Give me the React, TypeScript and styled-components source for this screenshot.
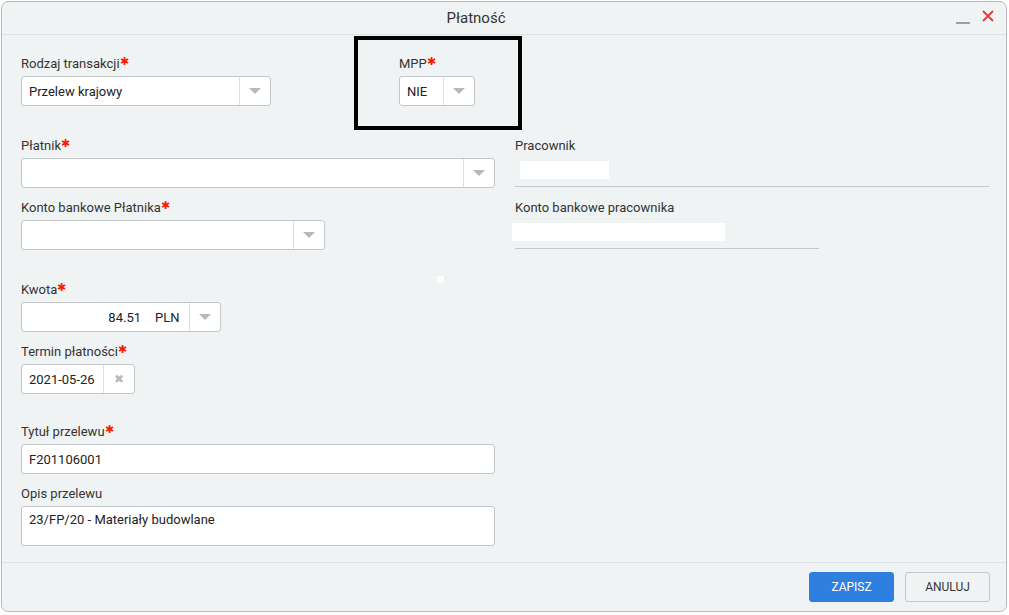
import styled, { createGlobalStyle } from "styled-components";

const GlobalStyle = createGlobalStyle`
  html, body {
    margin: 0;
    padding: 0;
    background: #ffffff;
    font-family: Roboto, "Liberation Sans", sans-serif;
  }
`;

const Caret = () => (
  <svg width="14" height="8" viewBox="0 0 14 8">
    <path d="M1 1 L13 1 L7 7 Z" fill="#b5b9bc" />
  </svg>
);

const CloseIcon = () => (
  <svg width="12" height="12" viewBox="0 0 12 12">
    <path d="M1 1 L11 11 M11 1 L1 11" stroke="#e53935" strokeWidth="1.8" />
  </svg>
);

const Label = ({ text, required }: { text: string; required?: boolean }) => (
  <LabelText>
    {text}
    {required && <Star>✱</Star>}
  </LabelText>
);

const App = () => {
  return (
    <>
      <GlobalStyle />
      <Window>
        <Header>
          <Title>Płatność</Title>
          <HeaderIcons>
            <Minimize />
            <CloseIcon />
          </HeaderIcons>
        </Header>

        <Body>
          <Row>
            <Field>
              <Label text="Rodzaj transakcji" required />
              <Select width={250}>
                <SelectValue>Przelew krajowy</SelectValue>
                <ArrowCell>
                  <Caret />
                </ArrowCell>
              </Select>
            </Field>
            <Highlight>
              <Field>
                <Label text="MPP" required />
                <Select width={76}>
                  <SelectValue>NIE</SelectValue>
                  <ArrowCell>
                    <Caret />
                  </ArrowCell>
                </Select>
              </Field>
            </Highlight>
          </Row>

          <Columns>
            <LeftCol>
              <Field>
                <Label text="Płatnik" required />
                <Select width={474}>
                  <SelectValue />
                  <ArrowCell>
                    <Caret />
                  </ArrowCell>
                </Select>
              </Field>
              <Field>
                <Label text="Konto bankowe Płatnika" required />
                <Select width={304}>
                  <SelectValue />
                  <ArrowCell>
                    <Caret />
                  </ArrowCell>
                </Select>
              </Field>
            </LeftCol>
            <RightCol>
              <ReadField width={474}>
                <Label text="Pracownik" />
                <Masked width={89} offset={5} />
              </ReadField>
              <ReadField width={304}>
                <Label text="Konto bankowe pracownika" />
                <Masked width={213} offset={-3} />
              </ReadField>
            </RightCol>
          </Columns>

          <Spot />

          <Stack>
            <Field>
              <Label text="Kwota" required />
              <Select width={200}>
                <Amount>84.51</Amount>
                <Currency>PLN</Currency>
                <ArrowCell>
                  <Caret />
                </ArrowCell>
              </Select>
            </Field>
            <Field>
              <Label text="Termin płatności" required />
              <Select width={114}>
                <SelectValue>2021-05-26</SelectValue>
                <ClearCell>✖</ClearCell>
              </Select>
            </Field>
          </Stack>

          <Stack style={{ marginTop: 28 }}>
            <Field>
              <Label text="Tytuł przelewu" required />
              <TextBox width={474}>F201106001</TextBox>
            </Field>
            <Field>
              <Label text="Opis przelewu" />
              <TextArea>23/FP/20 - Materiały budowlane</TextArea>
            </Field>
          </Stack>
        </Body>

        <Footer>
          <Button primary>ZAPISZ</Button>
          <Button>ANULUJ</Button>
        </Footer>
      </Window>
    </>
  );
};

const Window = styled.div`
  margin: 1px 2px 2px 1px;
  height: 611px;
  box-sizing: border-box;
  border: 1px solid #b9bcbe;
  border-radius: 7px;
  background: #f0f3f4;
  display: flex;
  flex-direction: column;
  color: #333;
  overflow: hidden;
`;

const Header = styled.div`
  height: 32px;
  border-bottom: 1px solid #dfe3e5;
  display: flex;
  align-items: center;
  justify-content: center;
  padding-right: 56px;
  position: relative;
`;

const Title = styled.div`
  font-size: 15px;
  color: #333;
`;

const HeaderIcons = styled.div`
  position: absolute;
  right: 12px;
  top: 8px;
  display: flex;
  align-items: flex-start;
  gap: 12px;
`;

const Minimize = styled.div`
  width: 14px;
  height: 2px;
  background: #9aa0a4;
  margin-top: 12px;
`;

const Body = styled.div`
  flex: 1;
  padding: 19px 0 0 19px;
  display: flex;
  flex-direction: column;
`;

const Row = styled.div`
  display: flex;
  align-items: flex-start;
  height: 82px;
`;

const Field = styled.div`
  display: flex;
  flex-direction: column;
  gap: 4px;
`;

const LabelText = styled.div`
  font-size: 13px;
  line-height: 16px;
  margin-top: 2px;
  color: #333;
`;

const Star = styled.span`
  color: #ff1a00;
  font-size: 11px;
  vertical-align: top;
  position: relative;
  top: -2px;
`;

const Highlight = styled.div`
  margin-left: 83px;
  margin-top: -18px;
  width: 168px;
  height: 94px;
  box-sizing: border-box;
  border: 4px solid #000;
  padding: 14px 0 0 41px;
`;

const Select = styled.div<{ width: number }>`
  width: ${(p) => p.width}px;
  height: 30px;
  box-sizing: border-box;
  background: #fff;
  border: 1px solid #c4c7c9;
  border-radius: 3px;
  display: flex;
  align-items: center;
  font-size: 13px;
  color: #222;
`;

const SelectValue = styled.div`
  flex: 1;
  padding-left: 7px;
`;

const Amount = styled.div`
  flex: 1;
  text-align: right;
  padding-right: 14px;
`;

const Currency = styled.div`
  width: 34px;
`;

const ArrowCell = styled.div`
  width: 30px;
  height: 100%;
  border-left: 1px solid #dcdfe1;
  display: flex;
  align-items: center;
  justify-content: center;
`;

const ClearCell = styled.div`
  width: 30px;
  height: 100%;
  border-left: 1px solid #dcdfe1;
  display: flex;
  align-items: center;
  justify-content: center;
  color: #b5b9bc;
  font-size: 12px;
`;

const Columns = styled.div`
  display: flex;
`;

const LeftCol = styled.div`
  width: 494px;
  display: flex;
  flex-direction: column;
  gap: 10px;
`;

const RightCol = styled.div`
  display: flex;
  flex-direction: column;
  gap: 11px;
`;

const ReadField = styled.div<{ width: number }>`
  width: ${(p) => p.width}px;
  height: 51px;
  box-sizing: border-box;
  border-bottom: 1px solid #c4c7c9;
  display: flex;
  flex-direction: column;
  gap: 7px;
`;

const Masked = styled.div<{ width: number; offset: number }>`
  width: ${(p) => p.width}px;
  height: 18px;
  margin-left: ${(p) => p.offset}px;
  background: #fff;
`;

const Spot = styled.div`
  width: 7px;
  height: 7px;
  background: #fff;
  margin: 26px 0 0 416px;
`;

const Stack = styled.div`
  display: flex;
  flex-direction: column;
  gap: 10px;
  margin-top: -3px;
`;

const TextBox = styled.div<{ width: number }>`
  width: ${(p) => p.width}px;
  height: 30px;
  box-sizing: border-box;
  background: #fff;
  border: 1px solid #c4c7c9;
  border-radius: 3px;
  display: flex;
  align-items: center;
  padding-left: 7px;
  font-size: 13px;
  color: #222;
`;

const TextArea = styled.div`
  width: 474px;
  height: 40px;
  box-sizing: border-box;
  background: #fff;
  border: 1px solid #c4c7c9;
  border-radius: 3px;
  padding: 5px 7px;
  font-size: 13px;
  color: #222;
`;

const Footer = styled.div`
  height: 48px;
  border-top: 1px solid #dfe3e5;
  display: flex;
  justify-content: flex-end;
  align-items: center;
  gap: 11px;
  padding-right: 16px;
`;

const Button = styled.div<{ primary?: boolean }>`
  width: 85px;
  height: 30px;
  box-sizing: border-box;
  border-radius: 3px;
  display: flex;
  align-items: center;
  justify-content: center;
  font-size: 12px;
  background: ${(p) => (p.primary ? "#2f7fe0" : "#f0f3f4")};
  color: ${(p) => (p.primary ? "#fff" : "#333")};
  border: 1px solid ${(p) => (p.primary ? "#2f7fe0" : "#c4c7c9")};
`;

export default App;
